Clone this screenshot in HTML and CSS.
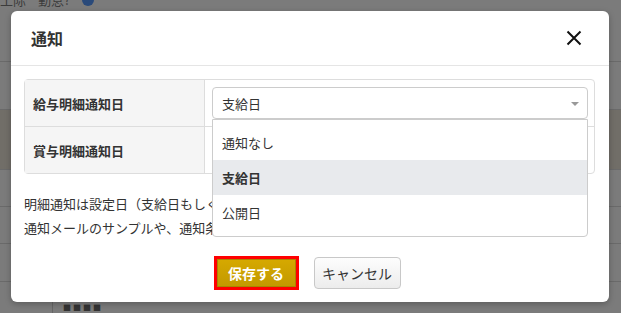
FILE: index.html
```html
<!DOCTYPE html>
<html lang="ja">
<head>
  <meta charset="UTF-8">
  <title>通知</title>
  <link rel="stylesheet" href="styles.css">
</head>
<body>

<div class="backdrop">
  <div class="bg-head">
    <span class="bg-cut">工际</span>
    <span class="bg-cut">勤怠?</span>
    <span class="bg-dot"></span>
  </div>
  <div class="bg-row bg-row-first"></div>
  <div class="bg-row bg-row-tall"></div>
  <div class="bg-row"></div>
  <div class="bg-row"></div>
  <div class="bg-row bg-row-short"></div>
  <div class="bg-row bg-row-last"><span class="bg-mark">■■■■</span></div>
</div>

<div class="modal">
  <div class="modal-header">
    <h3>通知</h3>
    <svg class="close" width="16" height="16" viewBox="0 0 16 16">
      <path d="M1.5 1.5 L14.5 14.5 M14.5 1.5 L1.5 14.5" stroke="#111" stroke-width="2" fill="none"/>
    </svg>
  </div>

  <div class="modal-body">
    <div class="settings">
      <div class="row">
        <div class="label">給与明細通知日</div>
        <div class="value">
          <div class="select-wrap">
            <div class="select">
              <span>支給日</span>
              <span class="arrow"></span>
            </div>
            <ul class="dropdown">
              <li>通知なし</li>
              <li class="active">支給日</li>
              <li>公開日</li>
            </ul>
          </div>
        </div>
      </div>
      <div class="row">
        <div class="label">賞与明細通知日</div>
        <div class="value"></div>
      </div>
    </div>

    <p class="note">
      明細通知は設定日（支給日もしくは公開日）に送信されます。<br>
      通知メールのサンプルや、通知条件についてはこちら
    </p>

    <div class="actions">
      <button class="btn btn-save">保存する</button>
      <button class="btn btn-cancel">キャンセル</button>
    </div>
  </div>
</div>

</body>
</html>
```

FILE: styles.css
```css
body {
  margin: 0;
  font-family: "Noto Sans CJK JP", "Noto Sans", sans-serif;
  color: #333;
  background: #7b7b7b;
  width: 621px;
  height: 313px;
  overflow: hidden;
  position: relative;
}
.backdrop {
  background: #7b7b7b;
  height: 313px;
  padding-top: 1px;
  margin-top: -1px;
}
.bg-head {
  height: 71px;
  margin-top: -9px;
  border-bottom: 1px solid #6a6a6a;
  display: flex;
  gap: 12px;
  font-size: 13px;
  color: #3c3c3c;
  box-sizing: border-box;
}
.bg-cut {
  line-height: 18px;
}
.bg-dot {
  width: 12px;
  height: 12px;
  border-radius: 50%;
  background: #2a4a7a;
  margin-top: 3px;
}
.bg-row {
  height: 36px;
  border-bottom: 1px solid #6a6a6a;
}
.bg-row-first {
  height: 47px;
}
.bg-row-tall {
  height: 59px;
  background: #716e68;
}
.bg-row-short {
  height: 37px;
}
.bg-row-last {
  border-bottom: none;
  height: 32px;
  border-left: 1px solid #666;
  margin-left: 52px;
  position: relative;
}
.bg-mark {
  position: absolute;
  left: 10px;
  top: 20px;
  font-size: 8px;
  color: #333;
  letter-spacing: 2px;
}
.modal {
  position: absolute;
  left: 11px;
  top: 11px;
  width: 598px;
  height: 291px;
  background: #fff;
  border-radius: 6px;
  box-shadow: 0 2px 6px rgba(0,0,0,0.25);
}
.modal-header {
  height: 54px;
  padding: 0 27px 0 20px;
  border-bottom: 1px solid #e5e5e5;
  display: flex;
  align-items: center;
  justify-content: space-between;
}
.modal-header h3 {
  margin: 0;
  font-size: 16px;
  font-weight: bold;
  color: #333;
}
.close {
  display: block;
}
.modal-body {
  padding: 13px 14px 13px 13px;
}
.settings {
  border: 1px solid #ddd;
  border-radius: 4px;
}
.row {
  display: flex;
  height: 46px;
}
.row + .row {
  border-top: 1px solid #ddd;
  height: 46px;
}
.label {
  width: 171px;
  background: #f5f5f5;
  border-right: 1px solid #ddd;
  padding-left: 8px;
  font-size: 13px;
  font-weight: bold;
  display: flex;
  align-items: center;
}
.value {
  flex: 1;
  padding: 7px 6px 0 7px;
}
.select-wrap {
  position: relative;
}
.select {
  height: 30px;
  border: 1px solid #ccc;
  border-radius: 4px;
  display: flex;
  align-items: center;
  justify-content: space-between;
  padding: 0 8px 0 9px;
  font-size: 13px;
  color: #333;
}
.arrow {
  width: 0;
  height: 0;
  border-left: 4px solid transparent;
  border-right: 4px solid transparent;
  border-top: 4px solid #999;
  margin-top: 2px;
}
.dropdown {
  position: absolute;
  left: 0;
  right: 0;
  top: 32px;
  margin: 0;
  padding: 5px 0 6px;
  list-style: none;
  background: #fff;
  border: 1px solid #ccc;
  border-radius: 0 0 4px 4px;
  z-index: 2;
}
.dropdown li {
  height: 35px;
  line-height: 35px;
  padding-left: 9px;
  font-size: 13px;
  color: #333;
}
.dropdown li.active {
  background: #e8eaed;
  font-weight: bold;
}
.note {
  margin: 18px 0 0 0;
  font-size: 13px;
  line-height: 24px;
  color: #333;
}
.actions {
  display: flex;
  justify-content: center;
  gap: 15px;
  margin-top: 16px;
  padding-right: 5px;
  align-items: center;
}
.btn {
  font-family: inherit;
  font-size: 14px;
  border-radius: 3px;
  cursor: pointer;
}
.btn-save {
  width: 85px;
  height: 34px;
  color: #fff;
  font-weight: bold;
  background: linear-gradient(#d6a900, #c29900);
  border: 3px solid #ff0000;
  border-radius: 0;
  box-shadow: inset 0 0 0 1px #a98600;
}
.btn-cancel {
  width: 87px;
  height: 32px;
  color: #333;
  background: linear-gradient(#fdfdfd, #ececec);
  border: 1px solid #c8c8c8;
  border-radius: 4px;
}
```
